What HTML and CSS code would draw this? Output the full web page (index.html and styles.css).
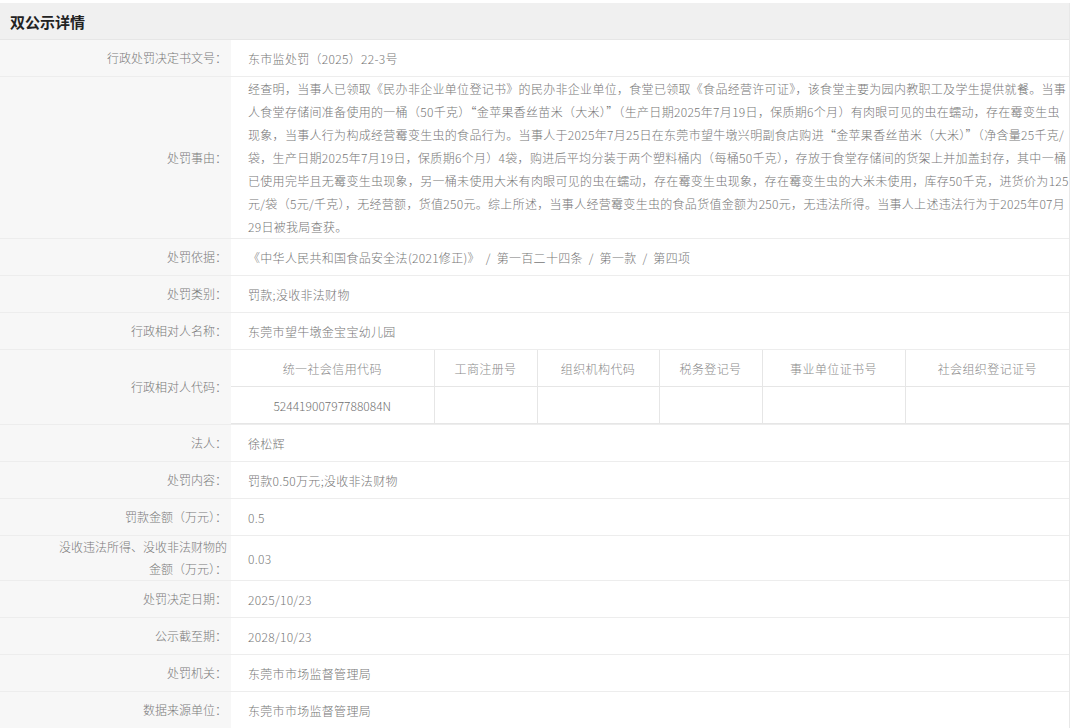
FILE: index.html
```html
<!DOCTYPE html>
<html lang="zh-CN">
<head>
<meta charset="utf-8">
<title>双公示详情</title>
<link rel="stylesheet" href="styles.css">
</head>
<body>
<div class="panel">
  <div class="title">双公示详情</div>
  <div class="row">
    <div class="label">行政处罚决定书文号：</div>
    <div class="value">东市监处罚（2025）22-3号</div>
  </div>
  <div class="row">
    <div class="label">处罚事由：</div>
    <div class="value long">经查明，当事人已领取《民办非企业单位登记书》的民办非企业单位，食堂已领取《食品经营许可证》，该食堂主要为园内教职工及学生提供就餐。当事<br>人食堂存储间准备使用的一桶（50千克）“金苹果香丝苗米（大米）”（生产日期2025年7月19日，保质期6个月）有肉眼可见的虫在蠕动，存在霉变生虫<br>现象，当事人行为构成经营霉变生虫的食品行为。当事人于2025年7月25日在东莞市望牛墩兴明副食店购进“金苹果香丝苗米（大米）”（净含量25千克/<br>袋，生产日期2025年7月19日，保质期6个月）4袋，购进后平均分装于两个塑料桶内（每桶50千克），存放于食堂存储间的货架上并加盖封存，其中一桶<br>已使用完毕且无霉变生虫现象，另一桶未使用大米有肉眼可见的虫在蠕动，存在霉变生虫现象，存在霉变生虫的大米未使用，库存50千克，进货价为125<br>元/袋（5元/千克），无经营额，货值250元。综上所述，当事人经营霉变生虫的食品货值金额为250元，无违法所得。当事人上述违法行为于2025年07月<br>29日被我局查获。</div>
  </div>
  <div class="row">
    <div class="label">处罚依据：</div>
    <div class="value">《中华人民共和国食品安全法(2021修正)》&nbsp; / &nbsp;第一百二十四条&nbsp; / &nbsp;第一款&nbsp; / &nbsp;第四项</div>
  </div>
  <div class="row">
    <div class="label">处罚类别：</div>
    <div class="value">罚款;没收非法财物</div>
  </div>
  <div class="row">
    <div class="label">行政相对人名称：</div>
    <div class="value">东莞市望牛墩金宝宝幼儿园</div>
  </div>
  <div class="row">
    <div class="label">行政相对人代码：</div>
    <div class="value table-cell">
      <table class="codes">
        <colgroup>
          <col class="c1"><col class="c2"><col class="c3"><col class="c4"><col class="c5"><col class="c6">
        </colgroup>
        <tr>
          <th>统一社会信用代码</th><th>工商注册号</th><th>组织机构代码</th><th>税务登记号</th><th>事业单位证书号</th><th>社会组织登记证号</th>
        </tr>
        <tr>
          <td>52441900797788084N</td><td></td><td></td><td></td><td></td><td></td>
        </tr>
      </table>
    </div>
  </div>
  <div class="row">
    <div class="label">法人：</div>
    <div class="value">徐松辉</div>
  </div>
  <div class="row">
    <div class="label">处罚内容：</div>
    <div class="value">罚款0.50万元;没收非法财物</div>
  </div>
  <div class="row">
    <div class="label">罚款金额（万元）：</div>
    <div class="value">0.5</div>
  </div>
  <div class="row">
    <div class="label">没收违法所得、没收非法财物的<br>金额（万元）：</div>
    <div class="value">0.03</div>
  </div>
  <div class="row">
    <div class="label">处罚决定日期：</div>
    <div class="value">2025/10/23</div>
  </div>
  <div class="row">
    <div class="label">公示截至期：</div>
    <div class="value">2028/10/23</div>
  </div>
  <div class="row">
    <div class="label">处罚机关：</div>
    <div class="value">东莞市市场监督管理局</div>
  </div>
  <div class="row">
    <div class="label">数据来源单位：</div>
    <div class="value">东莞市市场监督管理局</div>
  </div>
</div>
</body>
</html>
```

FILE: styles.css
```css
html, body {
  margin: 0;
  padding: 0;
  background: #ffffff;
}

body {
  font-family: "Noto Sans CJK SC", "Noto Sans", sans-serif;
  font-size: 12px;
  font-weight: 300;
  color: #7a7a7a;
  padding-top: 3px;
}

.panel {
  width: 1069px;
  border-right: 1px solid #e8e8e8;
}

.title {
  height: 37px;
  line-height: 37px;
  background: #f0f0f0;
  padding-left: 10px;
  font-size: 15px;
  font-weight: 700;
  color: #222222;
  border-bottom: 1px solid #e6e6e6;
  box-sizing: border-box;
}

.row {
  display: grid;
  grid-template-columns: 231px 1fr;
  border-bottom: 1px solid #ededed;
  min-height: 36px;
}

.label {
  background: #f7f7f7;
  display: flex;
  align-items: center;
  justify-content: flex-end;
  text-align: right;
  line-height: 22px;
  padding-right: 4px;
  color: #7a7a7a;
}

.value {
  display: flex;
  align-items: center;
  padding: 0 2px 0 17px;
  line-height: 23px;
  letter-spacing: 0.3px;
  color: #777777;
}

.value.long {
  display: block;
  white-space: nowrap;
}

.value.table-cell {
  padding: 0;
  align-items: stretch;
}

.codes {
  width: 838px;
  table-layout: fixed;
  border-collapse: collapse;
}

.c1 { width: 203px; }
.c2 { width: 103px; }
.c3 { width: 122px; }
.c4 { width: 103px; }
.c5 { width: 143px; }
.c6 { width: 164px; }

.codes th,
.codes td {
  height: 36px;
  padding: 0;
  text-align: center;
  font-weight: 300;
  color: #8a8a8a;
  border-right: 1px solid #e6e6e6;
  border-bottom: 1px solid #e6e6e6;
  letter-spacing: 0.4px;
}

.codes td {
  color: #707070;
  letter-spacing: 0;
}

.codes th:last-child,
.codes td:last-child {
  border-right: none;
}
```
